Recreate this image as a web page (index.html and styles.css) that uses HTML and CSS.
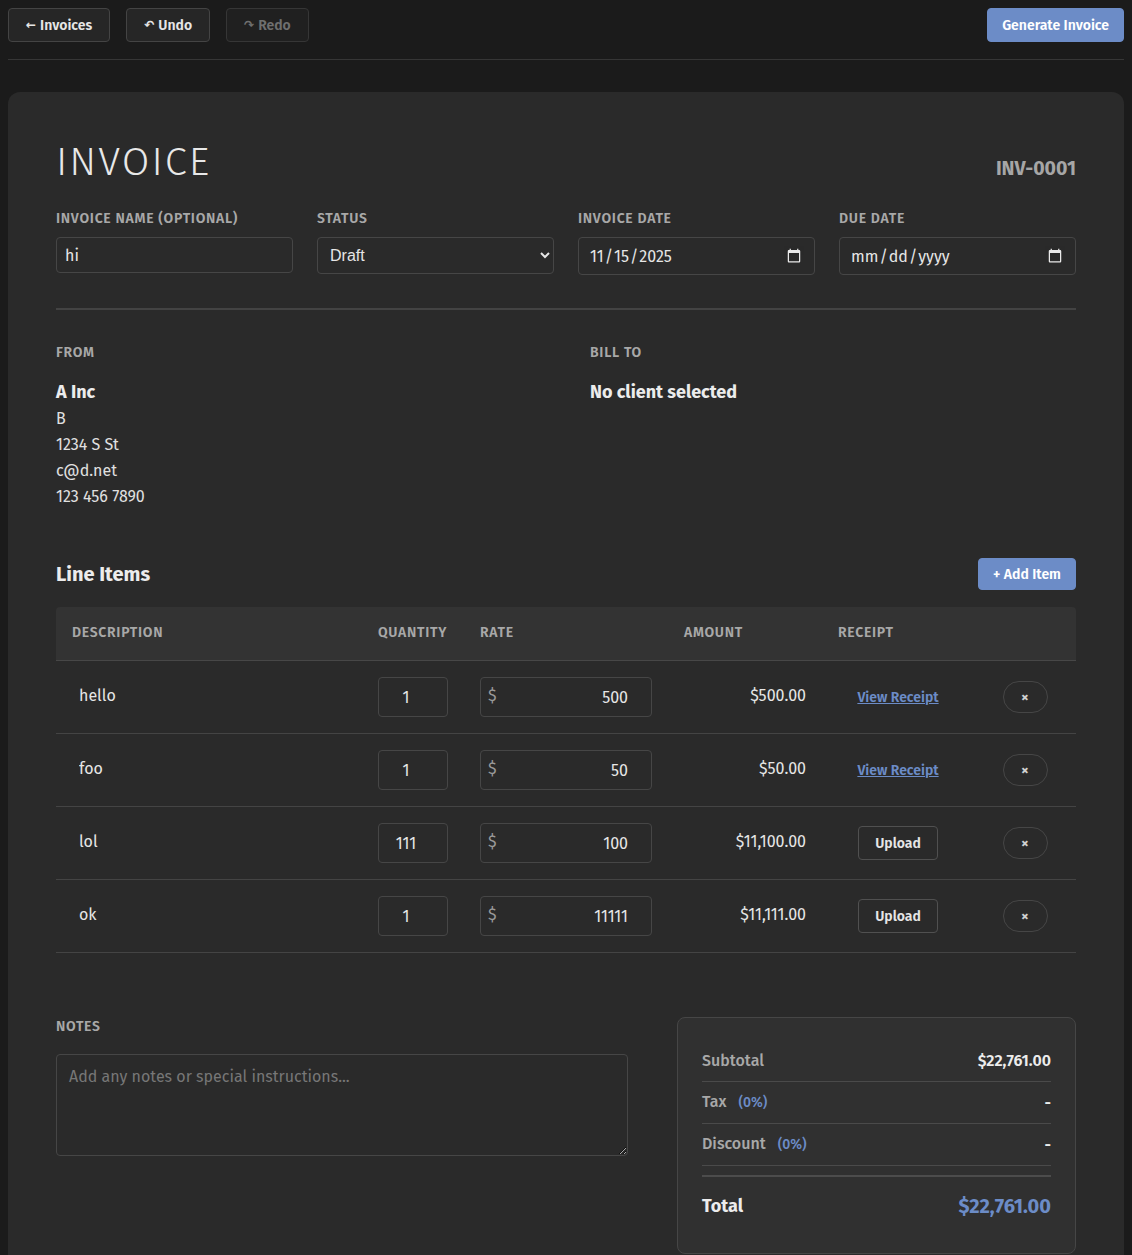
FILE: index.html
```html
<!DOCTYPE html>
<html lang="en">
<head>
<meta charset="utf-8">
<title>Invoice INV-0001</title>
<link rel="stylesheet" href="styles.css">
</head>
<body>
<header class="topbar">
  <div class="topbar-left">
    <button class="btn" type="button"><span class="glyph">←</span> Invoices</button>
    <button class="btn" type="button"><span class="glyph">↶</span> Undo</button>
    <button class="btn" type="button" disabled><span class="glyph">↷</span> Redo</button>
  </div>
  <button class="btn btn-primary" type="button">Generate Invoice</button>
</header>

<main class="card">
  <div class="title-row">
    <h1 class="title">INVOICE</h1>
    <div class="inv-number">INV-0001</div>
  </div>

  <div class="fields">
    <label class="field">
      <span class="label">Invoice Name (Optional)</span>
      <input class="input input-text" type="text" value="hi">
    </label>
    <label class="field">
      <span class="label">Status</span>
      <select class="input input-select">
        <option selected>Draft</option>
        <option>Sent</option>
        <option>Paid</option>
      </select>
    </label>
    <label class="field">
      <span class="label">Invoice Date</span>
      <input class="input input-date" type="date" value="2025-11-15">
    </label>
    <label class="field">
      <span class="label">Due Date</span>
      <input class="input input-date" type="date">
    </label>
  </div>

  <div class="parties">
    <div class="party">
      <div class="label">From</div>
      <div class="party-name">A Inc</div>
      <div class="party-line">B</div>
      <div class="party-line">1234 S St</div>
      <div class="party-line">c@d.net</div>
      <div class="party-line">123 456 7890</div>
    </div>
    <div class="party">
      <div class="label">Bill To</div>
      <div class="party-name">No client selected</div>
    </div>
  </div>

  <section class="line-items">
    <div class="section-head">
      <h2 class="section-title">Line Items</h2>
      <button class="btn btn-primary btn-sm" type="button">+ Add Item</button>
    </div>
    <table class="items">
      <colgroup>
        <col class="col-desc">
        <col class="col-qty">
        <col class="col-rate">
        <col class="col-amount">
        <col class="col-receipt">
        <col class="col-del">
      </colgroup>
      <thead>
        <tr>
          <th>Description</th>
          <th>Quantity</th>
          <th>Rate</th>
          <th>Amount</th>
          <th>Receipt</th>
          <th></th>
        </tr>
      </thead>
      <tbody>
        <tr>
          <td><input class="desc-input" type="text" value="hello"></td>
          <td><input class="qty-input" type="text" value="1"></td>
          <td><div class="rate-box"><span class="currency">$</span><input class="rate-input" type="text" value="500"></div></td>
          <td class="amount">$500.00</td>
          <td class="receipt"><a class="receipt-link" href="#">View Receipt</a></td>
          <td class="del"><button class="del-btn" type="button">×</button></td>
        </tr>
        <tr>
          <td><input class="desc-input" type="text" value="foo"></td>
          <td><input class="qty-input" type="text" value="1"></td>
          <td><div class="rate-box"><span class="currency">$</span><input class="rate-input" type="text" value="50"></div></td>
          <td class="amount">$50.00</td>
          <td class="receipt"><a class="receipt-link" href="#">View Receipt</a></td>
          <td class="del"><button class="del-btn" type="button">×</button></td>
        </tr>
        <tr>
          <td><input class="desc-input" type="text" value="lol"></td>
          <td><input class="qty-input" type="text" value="111"></td>
          <td><div class="rate-box"><span class="currency">$</span><input class="rate-input" type="text" value="100"></div></td>
          <td class="amount">$11,100.00</td>
          <td class="receipt"><button class="upload-btn" type="button">Upload</button></td>
          <td class="del"><button class="del-btn" type="button">×</button></td>
        </tr>
        <tr>
          <td><input class="desc-input" type="text" value="ok"></td>
          <td><input class="qty-input" type="text" value="1"></td>
          <td><div class="rate-box"><span class="currency">$</span><input class="rate-input" type="text" value="11111"></div></td>
          <td class="amount">$11,111.00</td>
          <td class="receipt"><button class="upload-btn" type="button">Upload</button></td>
          <td class="del"><button class="del-btn" type="button">×</button></td>
        </tr>
      </tbody>
    </table>
  </section>

  <section class="bottom">
    <div class="notes">
      <div class="label">Notes</div>
      <textarea class="notes-input" placeholder="Add any notes or special instructions..."></textarea>
    </div>
    <div class="summary">
      <div class="sum-row">
        <span class="sum-label">Subtotal</span>
        <span class="sum-value">$22,761.00</span>
      </div>
      <div class="sum-row">
        <span class="sum-label">Tax <span class="pct">(0%)</span></span>
        <span class="sum-value">-</span>
      </div>
      <div class="sum-row">
        <span class="sum-label">Discount <span class="pct">(0%)</span></span>
        <span class="sum-value">-</span>
      </div>
      <div class="sum-total">
        <span class="total-label">Total</span>
        <span class="total-value">$22,761.00</span>
      </div>
    </div>
  </section>
</main>
</body>
</html>
```

FILE: styles.css
```css
* {
  box-sizing: border-box;
}

html {
  color-scheme: dark;
}

body {
  margin: 0;
  padding: 8px;
  background: #1b1b1b;
  color: #e4e4e4;
  font-family: "Fira Sans", Roboto, "Liberation Sans", sans-serif;
  font-size: 16px;
  line-height: 1.5;
}

/* ---------- top bar ---------- */
.topbar {
  display: flex;
  justify-content: space-between;
  align-items: center;
  padding-bottom: 17px;
  border-bottom: 1px solid #363636;
}

.topbar-left {
  display: flex;
  gap: 16px;
}

.btn {
  display: inline-flex;
  align-items: center;
  gap: 4px;
  height: 34px;
  padding: 0 17px;
  border: 1px solid #444;
  border-radius: 4px;
  background: #262626;
  color: #e6e6e6;
  font-family: inherit;
  font-size: 14px;
  font-weight: 600;
  cursor: pointer;
}

.btn .glyph {
  font-family: "DejaVu Sans", sans-serif;
  font-size: 12px;
  font-weight: 700;
}

.btn:disabled {
  background: #202020;
  border-color: #363636;
  color: #6f6f6f;
}

.btn-primary {
  padding: 0 14px;
  background: #6c8cc7;
  border-color: #6c8cc7;
  color: #fff;
}

.btn-sm {
  height: 32px;
  padding: 0 14px;
}

/* ---------- card ---------- */
.card {
  margin-top: 32px;
  background: #2a2a2a;
  border-radius: 12px;
  padding: 48px 48px 64px;
}

.title-row {
  display: flex;
  justify-content: space-between;
  align-items: baseline;
}

.title {
  margin: 0;
  font-size: 40px;
  line-height: 1;
  font-weight: 300;
  letter-spacing: 2px;
  color: #e8e8e8;
  padding-top: 2px;
}

.inv-number {
  font-size: 19.5px;
  font-weight: 700;
  color: #a6a6a6;
}

.label {
  display: block;
  font-size: 14px;
  line-height: 20px;
  font-weight: 600;
  letter-spacing: 0.05em;
  text-transform: uppercase;
  color: #a8a8a8;
}

.fields {
  display: grid;
  grid-template-columns: repeat(4, 1fr);
  gap: 24px;
  margin-top: 26px;
  padding-bottom: 33px;
  border-bottom: 2px solid #434343;
}

.field {
  display: flex;
  flex-direction: column;
  gap: 8px;
  align-items: stretch;
}

.input {
  width: 100%;
  border: 1px solid #464646;
  border-radius: 4px;
  background: #2a2a2a;
  color: #e6e6e6;
  font-family: inherit;
  font-size: 16px;
}

.input-text {
  height: 36px;
  padding: 0 8px;
}

.input-select {
  height: 37px;
  padding: 0 8px;
  font-family: "Liberation Sans", Arial, sans-serif;
}

.input-date {
  height: 38px;
  padding: 0 10px;
  font-size: 16px;
}

.input-date::-webkit-calendar-picker-indicator {
  opacity: 0.9;
}

/* ---------- parties ---------- */
.parties {
  display: grid;
  grid-template-columns: 1fr 1fr;
  gap: 48px;
  margin-top: 33px;
}

.party .label {
  margin-bottom: 16px;
}

.party-name {
  font-size: 18px;
  font-weight: 700;
  line-height: 26px;
  color: #ececec;
  margin-bottom: 1px;
}

.party-line {
  line-height: 26px;
  color: #e0e0e0;
}

/* ---------- line items ---------- */
.line-items {
  margin-top: 48px;
}

.section-head {
  display: flex;
  justify-content: space-between;
  align-items: center;
  margin-bottom: 17px;
}

.section-title {
  margin: 0;
  font-size: 20px;
  font-weight: 700;
  color: #ececec;
}

.items {
  width: 100%;
  table-layout: fixed;
  border-collapse: collapse;
}

.col-qty { width: 102px; }
.col-rate { width: 204px; }
.col-amount { width: 154px; }
.col-receipt { width: 152px; }
.col-del { width: 102px; }

.items thead th {
  background: #333;
  padding: 16px 16px 17px;
  text-align: left;
  font-size: 14px;
  line-height: 20px;
  font-weight: 600;
  letter-spacing: 0.05em;
  text-transform: uppercase;
  color: #a8a8a8;
  border-bottom: 1px solid #474747;
}

.items thead th:first-child {
  border-top-left-radius: 4px;
}

.items thead th:last-child {
  border-top-right-radius: 4px;
}

.items tbody td {
  padding: 16px;
  border-bottom: 1px solid #444;
  vertical-align: middle;
  height: 73px;
}

.desc-input {
  width: 100%;
  height: 40px;
  padding: 0 6px 4px;
  border: 1px solid transparent;
  background: transparent;
  color: #e6e6e6;
  font-family: inherit;
  font-size: 16px;
}

.qty-input {
  width: 70px;
  height: 40px;
  padding: 0 14px 0 0;
  border: 1px solid #464646;
  border-radius: 4px;
  background: #2a2a2a;
  color: #e6e6e6;
  text-align: center;
  font-family: inherit;
  font-size: 16px;
}

.rate-box {
  display: flex;
  width: 172px;
  height: 40px;
  border: 1px solid #464646;
  border-radius: 4px;
}

.currency {
  padding: 6px 0 0 7px;
  color: #9a9a9a;
  font-size: 16px;
  line-height: 24px;
}

.rate-input {
  flex: 1;
  min-width: 0;
  padding: 0 23px 0 0;
  border: 0;
  background: transparent;
  color: #e6e6e6;
  text-align: right;
  font-family: inherit;
  font-size: 16px;
}

.amount {
  text-align: right;
  color: #e6e6e6;
}

.items tbody td.amount {
  padding-bottom: 19px;
}

.receipt {
  text-align: center;
}

.receipt-link {
  color: #6c8cc7;
  font-size: 14px;
  font-weight: 600;
  text-decoration: underline;
}

.upload-btn {
  width: 80px;
  height: 34px;
  border: 1px solid #505050;
  border-radius: 4px;
  background: transparent;
  color: #e6e6e6;
  font-family: inherit;
  font-size: 14px;
  font-weight: 600;
}

.del {
  text-align: center;
}

.del-btn {
  width: 45px;
  height: 32px;
  border: 1px solid #464646;
  border-radius: 16px;
  background: transparent;
  color: #cfcfcf;
  font-family: inherit;
  font-size: 15px;
  font-weight: 700;
  line-height: 1;
}

/* ---------- bottom ---------- */
.bottom {
  display: grid;
  grid-template-columns: 1fr 400px;
  gap: 48px;
  align-items: start;
  margin-top: 64px;
}

.notes .label {
  margin-bottom: 17px;
}

.notes-input {
  display: block;
  width: 100%;
  height: 102px;
  padding: 10px 12px;
  border: 1px solid #464646;
  border-radius: 4px;
  background: #2a2a2a;
  color: #e6e6e6;
  font-family: inherit;
  font-size: 16px;
  line-height: 24px;
  resize: vertical;
}

.notes-input::placeholder {
  color: #777;
}

.summary {
  margin-left: 1px;
  background: #303030;
  border: 1px solid #464646;
  border-radius: 8px;
  padding: 23px 24px;
}

.sum-row {
  display: flex;
  justify-content: space-between;
  align-items: center;
  padding: 8px 0;
  line-height: 24px;
  border-bottom: 1px solid #4a4a4a;
}

.sum-label {
  color: #a8a8a8;
  font-size: 16px;
  font-weight: 500;
}

.pct {
  margin-left: 8px;
  color: #6c8cc7;
  font-size: 14px;
}

.sum-value {
  color: #ececec;
  font-size: 16px;
  font-weight: 600;
}

.sum-total {
  display: flex;
  justify-content: space-between;
  align-items: center;
  margin-top: 9px;
  padding: 15px 0 10px;
  border-top: 2px solid #4c4c4c;
  line-height: 28px;
}

.total-label {
  font-size: 18px;
  font-weight: 700;
  color: #ececec;
}

.total-value {
  font-size: 20px;
  font-weight: 700;
  color: #6c8cc7;
}
```
